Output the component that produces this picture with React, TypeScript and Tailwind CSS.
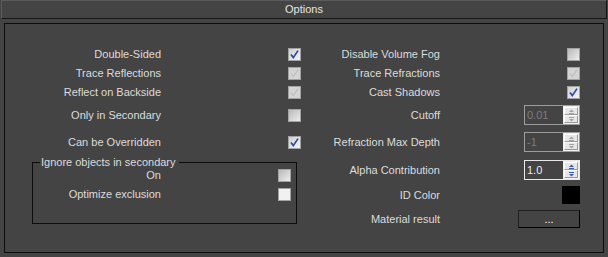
import React from "react";

type CheckState = "on" | "dimOn" | "off" | "blank";

const font = { fontFamily: '"Liberation Sans", Arial, sans-serif' };

function Check({ state }: { state: CheckState }) {
  const fill =
    state === "blank"
      ? "bg-[#f1f1f1]"
      : state === "off"
        ? "bg-linear-to-br from-[#b9b9b9] to-[#eeeeee]"
        : state === "on"
          ? "bg-linear-to-br from-[#cfcfcf] to-[#f5f5f5]"
          : "bg-[#d4d4d4]";
  return (
    <span className={`flex w-[13px] h-[13px] border border-[#a3a3a3] ${fill}`}>
      {(state === "on" || state === "dimOn") && (
        <svg width="11" height="11" viewBox="0 0 11 11">
          <path
            d="M2 5.5 L4.3 8.6 L9 1.6"
            fill="none"
            stroke={state === "on" ? "#2a48a8" : "#bdbdbd"}
            strokeWidth={state === "on" ? 1.7 : 1.1}
          />
        </svg>
      )}
    </span>
  );
}

function SpinBtn({ up, enabled }: { up?: boolean; enabled: boolean }) {
  const c = enabled ? "#3b5cb4" : "#a2a2a2";
  return (
    <span className="flex flex-1 items-center justify-center border border-t-white border-l-white border-b-[#9a9a9a] border-r-[#9a9a9a] bg-[#e6e6e6]">
      <svg width="7" height="5" viewBox="0 0 7 5">
        {up ? (
          <>
            <path d="M1 3 L3.5 0.5 L6 3 Z" fill={c} />
            <path d="M1 4.5 H6" stroke={c} strokeWidth="1" />
          </>
        ) : (
          <>
            <path d="M1 0.5 H6" stroke={c} strokeWidth="1" />
            <path d="M1 2 L3.5 4.5 L6 2 Z" fill={c} />
          </>
        )}
      </svg>
    </span>
  );
}

function Spinner({ value, enabled }: { value: string; enabled?: boolean }) {
  return (
    <div
      className={`flex w-[56px] h-[20px] border ${enabled ? "border-[#e8e8e8]" : "border-[#9d9d9d]"}`}
    >
      <span
        className={`flex-1 pl-[2px] text-[11px] leading-[18px] ${enabled ? "text-[#eeeeee]" : "text-[#7d7d7d]"}`}
      >
        {value}
      </span>
      <div className="flex flex-col w-[16px] bg-[#f0f0f0] p-[1px]">
        <SpinBtn up enabled={!!enabled} />
        <SpinBtn enabled={!!enabled} />
      </div>
    </div>
  );
}

function Row({
  label,
  labelW,
  h = "h-[18px]",
  mt = "",
  pr = "",
  children,
}: {
  label: string;
  labelW: string;
  h?: string;
  mt?: string;
  pr?: string;
  children: React.ReactNode;
}) {
  return (
    <div className={`flex items-center ${h} ${mt}`}>
      <span className={`${labelW} text-right whitespace-nowrap leading-[13px]`}>{label}</span>
      <div className={`flex flex-1 justify-end ${pr}`}>{children}</div>
    </div>
  );
}

export default function App() {
  const L = "w-[156px]";
  const R = "w-[139px]";
  return (
    <div className="w-[608px] h-[257px] bg-[#444444] text-[11px] text-[#dcdcdc]" style={font}>
      {/* header */}
      <div className="ml-[1px] w-[606px] h-[19px] flex items-center justify-center border-t border-l border-t-[#5c5c5c] border-l-[#5c5c5c] border-b border-r border-b-[#161616] border-r-[#161616] text-[#e4e4e4]">
        Options
      </div>

      {/* main group */}
      <div className="ml-[4px] mt-[4px] w-[600px] h-[230px] border border-[#0c0c0c] flex pt-[21px]">
        {/* left column */}
        <div className="w-[296px] flex flex-col">
          <Row label="Double-Sided" labelW={L}>
            <Check state="on" />
          </Row>
          <Row label="Trace Reflections" labelW={L} mt="mt-[1px]">
            <Check state="dimOn" />
          </Row>
          <Row label="Reflect on Backside" labelW={L} mt="mt-[1px]">
            <Check state="dimOn" />
          </Row>
          <Row label="Only in Secondary" labelW={L} mt="mt-[5px]">
            <Check state="off" />
          </Row>
          <Row label="Can be Overridden" labelW={L} mt="mt-[9px]">
            <Check state="on" />
          </Row>

          <fieldset className="ml-[27px] mt-[5px] w-[265px] border border-[#0c0c0c] pb-[22px]">
            <legend className="ml-[7px] pl-[1px] pr-[3px] leading-[13px] whitespace-nowrap">
              Ignore objects in secondary
            </legend>
            <Row label="On" labelW="w-[128px]" h="h-[13px]" pr="pr-[5px]">
              <Check state="off" />
            </Row>
            <Row label="Optimize exclusion" labelW="w-[128px]" h="h-[13px]" mt="mt-[6px]" pr="pr-[5px]">
              <Check state="blank" />
            </Row>
          </fieldset>
        </div>

        {/* right column */}
        <div className="w-[279px] flex flex-col">
          <Row label="Disable Volume Fog" labelW={R}>
            <Check state="off" />
          </Row>
          <Row label="Trace Refractions" labelW={R} mt="mt-[1px]">
            <Check state="dimOn" />
          </Row>
          <Row label="Cast Shadows" labelW={R} mt="mt-[1px]">
            <Check state="on" />
          </Row>
          <Row label="Cutoff" labelW={R} mt="mt-[5px]">
            <Spinner value="0.01" />
          </Row>
          <Row label="Refraction Max Depth" labelW={R} mt="mt-[9px]">
            <Spinner value="-1" />
          </Row>
          <Row label="Alpha Contribution" labelW={R} h="h-[20px]" mt="mt-[9px]">
            <Spinner value="1.0" enabled />
          </Row>
          <Row label="ID Color" labelW={R} mt="mt-[6px]">
            <span className="block w-[18px] h-[18px] bg-black" />
          </Row>
          <Row label="Material result" labelW={R} mt="mt-[6px]">
            <button className="w-[62px] h-[18px] border border-t-[#202020] border-l-[#202020] border-b-black border-r-black text-white text-[11px] leading-[14px]">
              ...
            </button>
          </Row>
        </div>
      </div>
    </div>
  );
}
